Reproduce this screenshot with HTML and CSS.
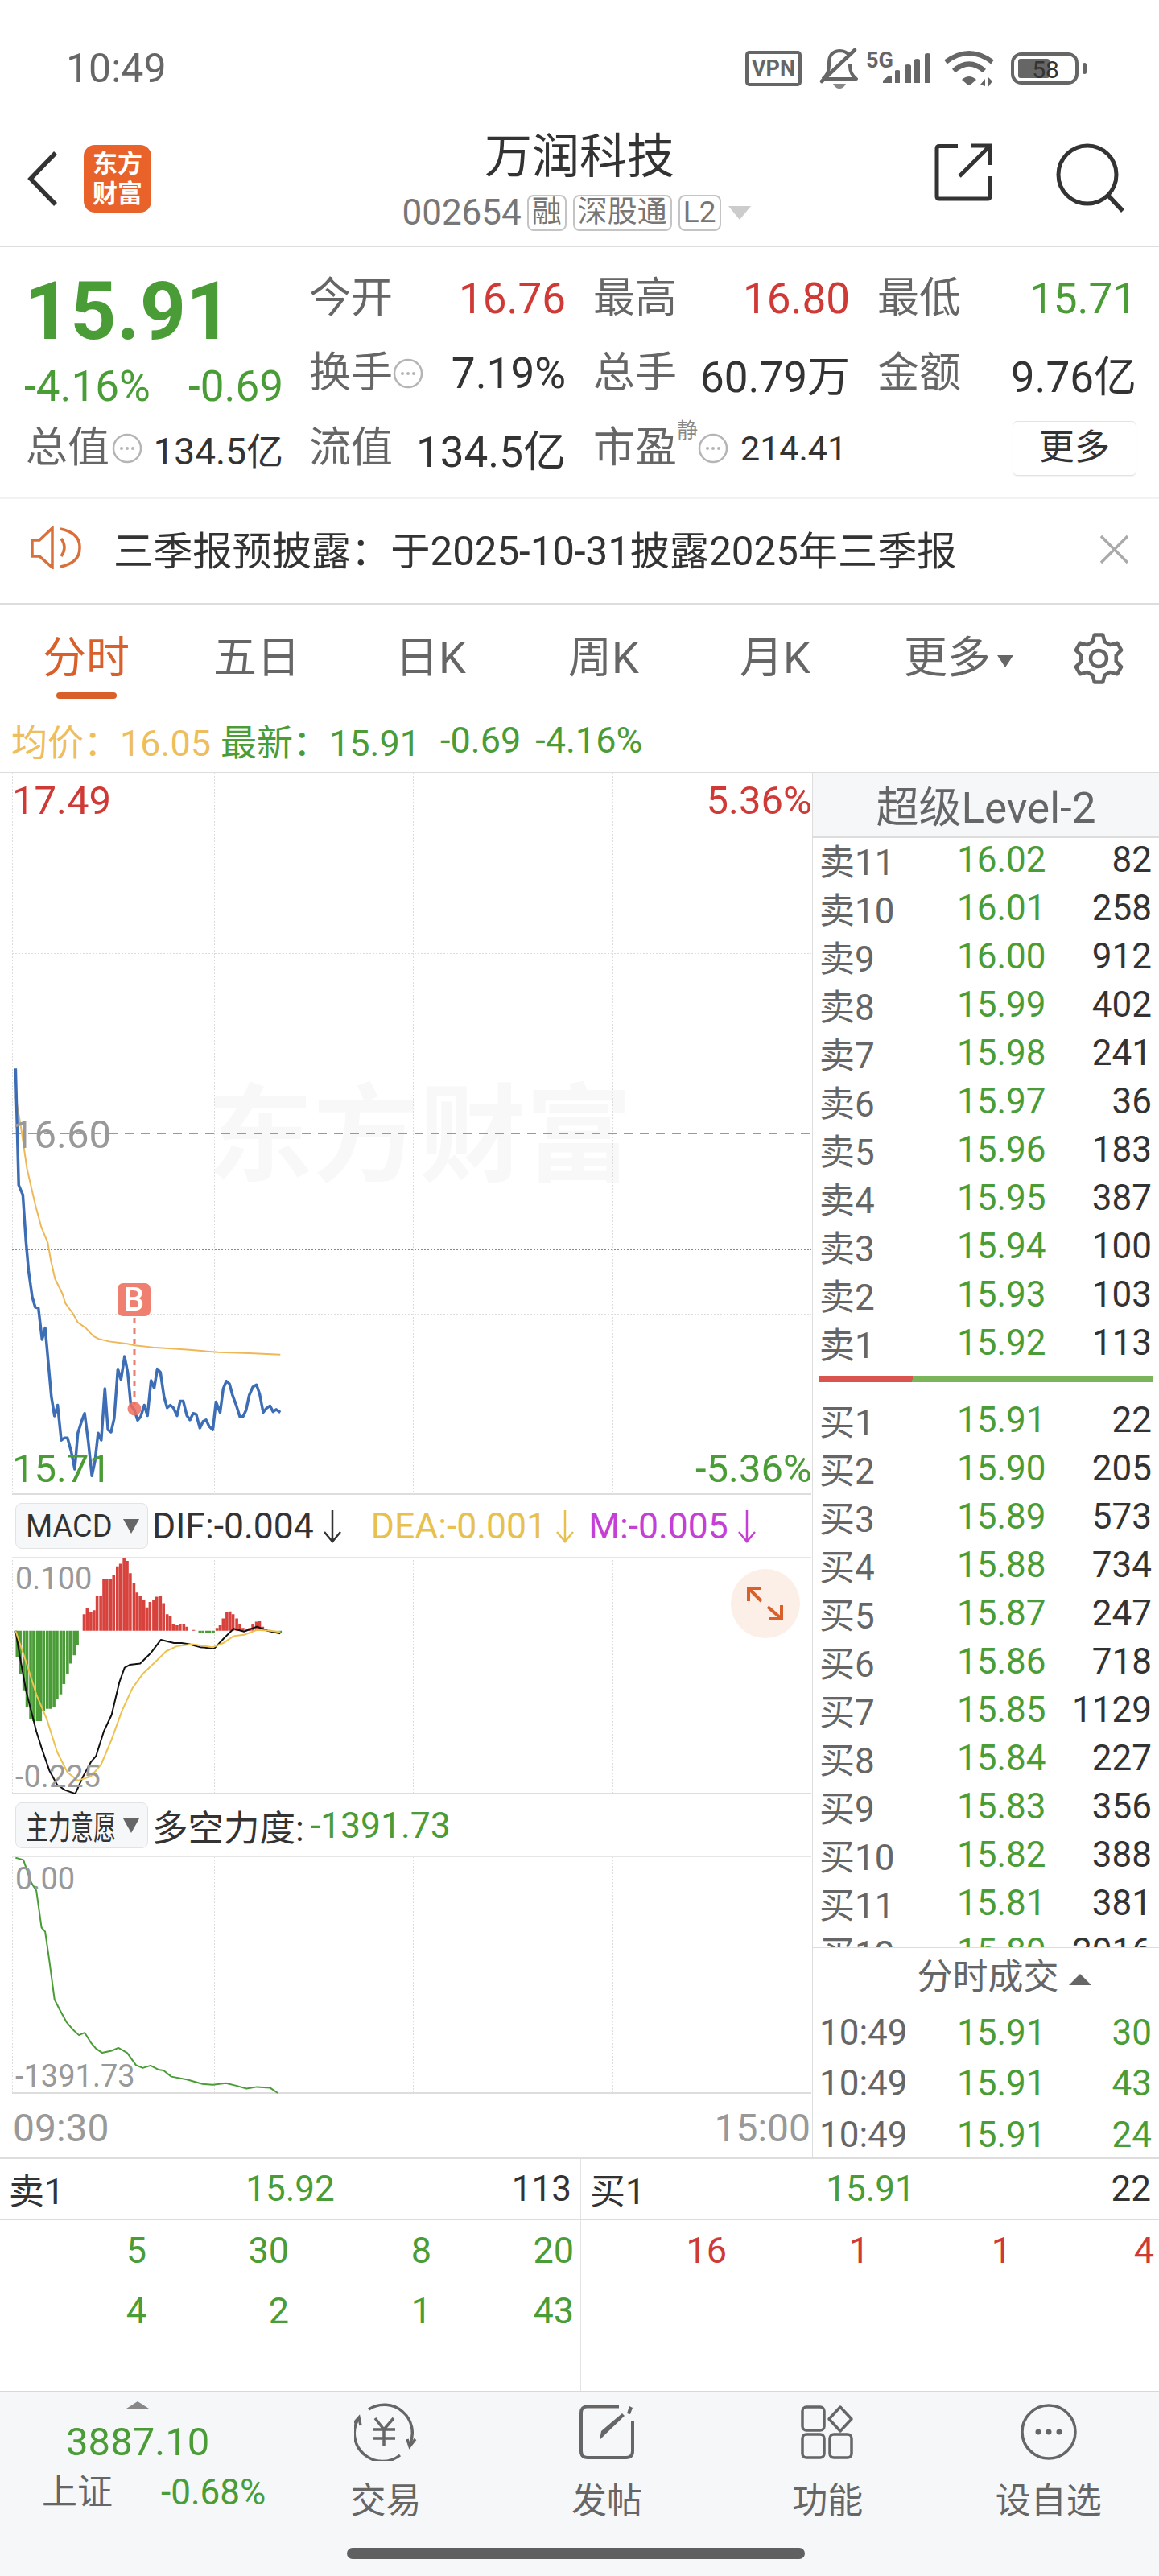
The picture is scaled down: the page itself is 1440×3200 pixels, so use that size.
FILE: index.html
```html
<!DOCTYPE html>
<html lang="zh-CN">
<head>
    <meta charset="UTF-8">
    <meta name="viewport" content="width=device-width, initial-scale=1.0">
    <title>万润科技</title>
    <link rel="stylesheet" href="styles.css">
</head>
<body>
    <svg class="defs" width="0" height="0">
        <symbol id="dots" viewBox="0 0 38 38">
            <circle cx="19" cy="19" r="17" fill="none" stroke="#b5b5b5" stroke-width="2.5"/>
            <circle cx="12" cy="19" r="2" fill="#b5b5b5"/><circle cx="19" cy="19" r="2" fill="#b5b5b5"/><circle cx="26" cy="19" r="2" fill="#b5b5b5"/>
        </symbol>
        <symbol id="down" viewBox="0 0 24 42">
            <path d="M12 1V40M2 28L12 40L22 28" fill="none" stroke="currentColor" stroke-width="2.5"/>
        </symbol>
    </svg>

    <div class="status">
        <span class="time">10:49</span>
        <div class="status-icons">
            <svg width="70" height="44" viewBox="0 0 70 44"><rect x="2" y="2" width="66" height="40" rx="3" fill="none" stroke="#666" stroke-width="4"/><text x="35" y="31" class="svg-vpn">VPN</text></svg>
            <svg class="si-bell" width="48" height="50" viewBox="0 0 48 50"><path d="M4 38Q12 32 12 22V18Q12 4 25 3Q34 3 38 10M38 20V22Q38 32 46 38H4" fill="none" stroke="#666" stroke-width="4" stroke-linejoin="round"/><path d="M3 41L44 2" stroke="#666" stroke-width="4.5" stroke-linecap="round"/><path d="M17 44H33Q30 50 25 50Q20 50 17 44Z" fill="#888"/></svg>
            <svg class="si-sig" width="80" height="46" viewBox="0 0 80 46"><text x="0" y="22" class="svg-5g">5G</text><path d="M21 41V38L27 33H32V41ZM36 41V26Q36 25 39 25Q42 25 42 26V41ZM48 41V20Q48 18 52 18Q56 18 56 20V41ZM60 41V13Q60 11 63.500 11Q67 11 67 13V41ZM73 41V6Q73 4 76.500 4Q80 4 80 6V41Z" fill="#666"/></svg>
            <svg class="si-wifi" width="64" height="48" viewBox="0 0 64 48"><path d="M3 16Q32 -6 61 16" fill="none" stroke="#666" stroke-width="6"/><path d="M13 27Q32 10 51 27" fill="none" stroke="#666" stroke-width="6"/><path d="M23 38L30 44Q32 45 34 44L41 38Q32 30 23 38Z" fill="#666"/><path d="M46 44L52 37V46ZM55 34V48L61 40Z" fill="#666"/></svg>
            <svg class="si-batt" width="94" height="40" viewBox="0 0 94 40"><rect x="2" y="2" width="80" height="36" rx="11" fill="none" stroke="#666" stroke-width="4"/><rect x="9" y="8" width="39" height="24" rx="3" fill="#666"/><rect x="89" y="13" width="5" height="14" rx="2.5" fill="#666"/><text x="43" y="32" class="svg-batt">58</text></svg>
        </div>
    </div>

    <div class="header">
        <div class="header-left">
            <svg width="38" height="68" viewBox="0 0 38 68"><path d="M35 2L4 34L35 66" fill="none" stroke="#333" stroke-width="5.500"/></svg>
            <div class="logo">东方<br>财富</div>
        </div>
        <div class="header-title">
            <div class="stock-name">万润科技</div>
            <div class="stock-sub">
                <span class="code">002654</span>
                <span class="tag">融</span><span class="tag">深股通</span><span class="tag">L2</span>
                <span class="tri-light"></span>
            </div>
        </div>
        <div class="header-right">
            <svg width="72" height="72" viewBox="0 0 72 72"><path d="M29 3.5H6Q3 3.500 3 6.500V66Q3 69 6 69H66Q69 69 69 66V41M69 27V3H45M31 41L69 3" fill="none" stroke="#333" stroke-width="5"/></svg>
            <svg width="88" height="88" viewBox="0 0 88 88"><circle cx="40" cy="39" r="36" fill="none" stroke="#333" stroke-width="5"/><path d="M66 65L84 84" stroke="#333" stroke-width="5.500"/></svg>
        </div>
    </div>

    <div class="quote">
        <div class="quote-left">
            <div class="price">15.91</div>
            <div class="change"><span>-4.16%</span><span>-0.69</span></div>
            <div class="cap"><span class="label">总值</span><svg class="dots"><use href="#dots"/></svg><span class="val-sm">134.5亿</span></div>
        </div>
        <div class="quote-grid">
            <div class="cell"><span class="label">今开</span><span class="val up">16.76</span></div>
            <div class="cell"><span class="label">最高</span><span class="val up">16.80</span></div>
            <div class="cell"><span class="label">最低</span><span class="val down">15.71</span></div>
            <div class="cell"><span class="label">换手</span><svg class="dots"><use href="#dots"/></svg><span class="val">7.19%</span></div>
            <div class="cell"><span class="label">总手</span><span class="val">60.79万</span></div>
            <div class="cell"><span class="label">金额</span><span class="val">9.76亿</span></div>
            <div class="cell"><span class="label">流值</span><span class="val">134.5亿</span></div>
            <div class="cell cell-pe"><span class="label">市盈</span><span class="sup">静</span><svg class="dots"><use href="#dots"/></svg><span class="val-pe">214.41</span></div>
            <div class="cell cell-more"><span class="more-btn">更多</span></div>
        </div>
    </div>

    <div class="notice">
        <svg width="63" height="53" viewBox="0 0 63 53"><g fill="none" stroke="#d9703a" stroke-width="3.500"><path d="M2 17H11L27 2V51L11 37H2Z"/><path d="M38 15Q46 26 38 37"/><path d="M37 3Q62 8 61 27Q61 45 37 50"/></g></svg>
        <span class="notice-text">三季报预披露：于2025-10-31披露2025年三季报</span>
        <svg class="notice-close" width="37" height="37" viewBox="0 0 37 37"><path d="M2 2L35 35M35 2L2 35" stroke="#aaa" stroke-width="3.500"/></svg>
    </div>

    <div class="tabs">
        <div class="tab active">分时</div>
        <div class="tab">五日</div>
        <div class="tab">日K</div>
        <div class="tab">周K</div>
        <div class="tab">月K</div>
        <div class="tab">更多<span class="tri-tab"></span></div>
        <div class="tab tab-gear">
            <svg width="64" height="64" viewBox="0 0 64 64"><polygon points="24.500,11.300 26.800,2.500 37.200,2.500 39.500,11.300 46.100,15.100 55,12.700 60.200,21.700 53.700,28.200 53.700,35.800 60.200,42.300 55,51.300 46.100,48.900 39.500,52.700 37.200,61.500 26.800,61.500 24.500,52.700 17.900,48.900 9,51.300 3.800,42.300 10.300,35.800 10.300,28.200 3.800,21.700 9,12.700 17.900,15.100" fill="none" stroke="#666" stroke-width="4.500" stroke-linejoin="round"/><circle cx="32" cy="32" r="10" fill="none" stroke="#666" stroke-width="4.500"/></svg>
        </div>
    </div>

    <div class="info">
        <span class="avg">均价：16.05</span>
        <span class="latest">最新：15.91</span>
        <span class="latest info-gap">-0.69</span>
        <span class="latest info-gap2">-4.16%</span>
    </div>

    <div class="main">
        <div class="charts">
            <div class="panel panel-price">
                <svg class="canvas" width="994" height="897" viewBox="15 960 994 897">
                    <text x="257" y="1457" class="watermark">东方财富</text>
                    <g class="grid">
                        <path d="M15 960V1857M266 960V1857M513 960V1857M761 960V1857M15 1184H1008M15 1632H1008"/>
                    </g>
                    <path d="M15 1408H1008" class="line-dash"/>
                    <path d="M15 1552.500H1008" class="line-prev"/>
                    <path d="M15 1856H1008" class="line-edge"/>
                    <g transform="translate(0 1260) scale(.645 .408)">
                        <polyline class="avg-line" points="30,250 40,340 52,470 68,580 80,650 92,695 98,750 106,805 120,850 126,880 140,910 150,938 165,955 180,980 190,988 210,996 245,1003 260,1008 300,1015 360,1021 420,1029 480,1032 540,1036"/>
                        <polyline class="price-line" points="30,165 36,520 44,550 50,690 55,780 62,860 68,892 74,895 81,990 87,955 93,1060 99,1165 105,1223 111,1190 118,1297 124,1290 130,1290 137,1330 144,1385 150,1275 157,1240 163,1215 170,1300 177,1405 183,1360 189,1275 195,1297 202,1140 208,1265 214,1272 220,1230 227,1080 233,1112 240,1042 246,1090 252,1190 259,1205 265,1236 271,1225 278,1190 284,1222 291,1115 297,1138 303,1080 309,1090 316,1165 322,1198 328,1190 334,1198 341,1222 347,1178 353,1178 360,1222 366,1235 372,1215 378,1218 385,1260 391,1240 397,1235 403,1255 410,1265 416,1180 424,1212 430,1140 436,1117 442,1125 448,1160 455,1190 462,1225 468,1225 474,1205 480,1160 487,1135 494,1128 500,1155 507,1212 513,1200 520,1192 526,1210 532,1203 540,1212"/>
                    </g>
                    <path d="M167 1637V1745" class="b-line"/>
                    <circle cx="167" cy="1750" r="8.500" fill="#ee6f5f" fill-opacity=".85"/>
                    <rect x="146" y="1594" width="41" height="41" rx="7" fill="#ee7f71"/>
                    <text x="166.500" y="1628" class="b-text">B</text>
                </svg>
                <span class="chart-label tl up">17.49</span>
                <span class="chart-label tr up">5.36%</span>
                <span class="chart-label mid">16.60</span>
                <span class="chart-label bl down">15.71</span>
                <span class="chart-label br down">-5.36%</span>
            </div>

            <div class="ind-row">
                <div class="picker"><span class="picker-name">MACD</span><span class="tri-pick"></span></div>
                <span class="ind">DIF:-0.004</span><svg class="arrow ink"><use href="#down"/></svg>
                <span class="ind dea ind-gap">DEA:-0.001</span><svg class="arrow dea"><use href="#down"/></svg>
                <span class="ind mag ind-gap2">M:-0.005</span><svg class="arrow mag"><use href="#down"/></svg>
            </div>

            <div class="panel panel-sub">
                <svg class="canvas" width="994" height="295" viewBox="15 1934 994 295">
                    <g class="grid"><path d="M15 1934V2228M266 1934V2228M513 1934V2228M761 1934V2228"/></g>
                    <path d="M15 1934.500H1008" class="line-top"/>
                    <path d="M15 2228H1008" class="line-edge"/>
                    <g transform="translate(0 1860) scale(.645 .51)">
                        <path class="bars-green" d="M33 325V390M39 325V430M46 325V470M52 325V510M59 325V540M65 325V545M72 325V545M78 325V545M84 325V520M91 325V515M97 325V515M104 325V510M110 325V490M117 325V480M123 325V455M130 325V430M136 325V405M143 325V385M149 325V360M385 325V330M391 325V330M398 325V330M404 325V330M411 325V330M540 325V330"/>
                        <path class="bars-red" d="M162 325V285M168 325V270M175 325V280M181 325V275M187 325V240M194 325V240M200 325V200M206 325V200M213 325V200M219 325V190M226 325V168M232 325V162M239 325V148M245 325V155M251 325V185M258 325V210M264 325V232M270 325V240M277 325V250M283 325V268M289 325V255M296 325V250M302 325V242M309 325V240M315 325V258M322 325V285M328 325V290M334 325V310M341 325V312M347 325V308M354 325V308M360 325V315M373 325V323M418 325V318M424 325V312M430 325V295M437 325V280M443 325V278M449 325V285M456 325V295M462 325V310M468 325V318M475 325V322M481 325V318M487 325V310M494 325V303M500 325V302M506 325V315M513 325V322M519 325V323"/>
                        <polyline class="dif-line" points="30,325 40,400 50,470 60,520 70,570 80,610 95,665 110,700 125,713 145,722 160,680 175,645 185,630 200,570 215,530 230,450 240,415 250,408 270,405 290,380 310,347 335,355 350,355 365,358 385,365 413,368 430,345 450,320 470,327 495,315 515,325 540,332"/>
                        <polyline class="dea-line" points="30,325 50,400 70,480 90,540 110,620 130,670 150,690 175,680 195,650 215,590 235,520 255,465 275,430 300,400 320,375 340,363 370,358 410,365 430,355 450,338 470,335 495,323 520,325 540,328"/>
                    </g>
                    <circle cx="951" cy="1992" r="43" fill="#fbefe8"/>
                    <path d="M930 1989V1973H945M930 1973L946 1989M971 1994V2011H955M971 2011L954 1996" fill="none" stroke="#d9602b" stroke-width="4"/>
                </svg>
                <span class="chart-label small sub-top">0.100</span>
                <span class="chart-label small sub-bot">-0.225</span>
            </div>

            <div class="ind-row">
                <div class="picker"><span class="picker-cn">主力意愿</span><span class="tri-pick"></span></div>
                <span class="ind ind-cn">多空力度:</span>
                <span class="ind down">-1391.73</span>
            </div>

            <div class="panel panel-sub">
                <svg class="canvas" width="994" height="295" viewBox="15 2307 994 295">
                    <g class="grid"><path d="M15 2307V2601M266 2307V2601M513 2307V2601M761 2307V2601"/></g>
                    <path d="M15 2307.500H1008" class="line-top"/>
                    <path d="M15 2601H1008" class="line-edge"/>
                    <g transform="translate(0 1860) scale(.645 .51)">
                        <polyline class="force-line" points="30,880 45,885 60,940 70,960 80,1050 87,1060 95,1130 105,1225 115,1250 128,1280 140,1298 152,1312 163,1306 175,1330 185,1345 197,1355 215,1350 228,1343 245,1355 262,1385 275,1392 290,1386 305,1396 315,1398 330,1413 360,1420 390,1431 410,1433 435,1429 455,1435 475,1442 495,1438 520,1440 535,1453"/>
                    </g>
                </svg>
                <span class="chart-label small sub-top-b">0.00</span>
                <span class="chart-label small sub-bot-b">-1391.73</span>
            </div>

            <div class="time-row"><span>09:30</span><span>15:00</span></div>
        </div>

        <div class="book">
            <div class="book-head">超级Level-2</div>
            <div class="book-list">
                <div class="lv"><span class="lv-name">卖11</span><span class="lv-price">16.02</span><span class="lv-vol">82</span></div>
                <div class="lv"><span class="lv-name">卖10</span><span class="lv-price">16.01</span><span class="lv-vol">258</span></div>
                <div class="lv"><span class="lv-name">卖9</span><span class="lv-price">16.00</span><span class="lv-vol">912</span></div>
                <div class="lv"><span class="lv-name">卖8</span><span class="lv-price">15.99</span><span class="lv-vol">402</span></div>
                <div class="lv"><span class="lv-name">卖7</span><span class="lv-price">15.98</span><span class="lv-vol">241</span></div>
                <div class="lv"><span class="lv-name">卖6</span><span class="lv-price">15.97</span><span class="lv-vol">36</span></div>
                <div class="lv"><span class="lv-name">卖5</span><span class="lv-price">15.96</span><span class="lv-vol">183</span></div>
                <div class="lv"><span class="lv-name">卖4</span><span class="lv-price">15.95</span><span class="lv-vol">387</span></div>
                <div class="lv"><span class="lv-name">卖3</span><span class="lv-price">15.94</span><span class="lv-vol">100</span></div>
                <div class="lv"><span class="lv-name">卖2</span><span class="lv-price">15.93</span><span class="lv-vol">103</span></div>
                <div class="lv"><span class="lv-name">卖1</span><span class="lv-price">15.92</span><span class="lv-vol">113</span></div>
            </div>
            <div class="ratio-bar"></div>
            <div class="book-list buy-list">
                <div class="lv"><span class="lv-name">买1</span><span class="lv-price">15.91</span><span class="lv-vol">22</span></div>
                <div class="lv"><span class="lv-name">买2</span><span class="lv-price">15.90</span><span class="lv-vol">205</span></div>
                <div class="lv"><span class="lv-name">买3</span><span class="lv-price">15.89</span><span class="lv-vol">573</span></div>
                <div class="lv"><span class="lv-name">买4</span><span class="lv-price">15.88</span><span class="lv-vol">734</span></div>
                <div class="lv"><span class="lv-name">买5</span><span class="lv-price">15.87</span><span class="lv-vol">247</span></div>
                <div class="lv"><span class="lv-name">买6</span><span class="lv-price">15.86</span><span class="lv-vol">718</span></div>
                <div class="lv"><span class="lv-name">买7</span><span class="lv-price">15.85</span><span class="lv-vol">1129</span></div>
                <div class="lv"><span class="lv-name">买8</span><span class="lv-price">15.84</span><span class="lv-vol">227</span></div>
                <div class="lv"><span class="lv-name">买9</span><span class="lv-price">15.83</span><span class="lv-vol">356</span></div>
                <div class="lv"><span class="lv-name">买10</span><span class="lv-price">15.82</span><span class="lv-vol">388</span></div>
                <div class="lv"><span class="lv-name">买11</span><span class="lv-price">15.81</span><span class="lv-vol">381</span></div>
                <div class="lv"><span class="lv-name">买12</span><span class="lv-price">15.80</span><span class="lv-vol">2016</span></div>
            </div>
            <div class="ticks">
                <div class="ticks-head">分时成交<span class="tri-up"></span></div>
                <div class="tick"><span class="lv-name">10:49</span><span class="lv-price">15.91</span><span class="lv-vol down">30</span></div>
                <div class="tick"><span class="lv-name">10:49</span><span class="lv-price">15.91</span><span class="lv-vol down">43</span></div>
                <div class="tick"><span class="lv-name">10:49</span><span class="lv-price">15.91</span><span class="lv-vol down">24</span></div>
            </div>
        </div>
    </div>

    <div class="best">
        <div class="best-side"><span>卖1</span><span class="down">15.92</span><span class="best-vol">113</span></div>
        <div class="best-side best-buy"><span>买1</span><span class="down">15.91</span><span class="best-vol">22</span></div>
    </div>
    <div class="flow">
        <div class="flow-side">
            <span class="down">5</span><span class="down">30</span><span class="down">8</span><span class="down">20</span>
            <span class="down">4</span><span class="down">2</span><span class="down">1</span><span class="down">43</span>
        </div>
        <div class="flow-side flow-buy">
            <span class="up">16</span><span class="up">1</span><span class="up">1</span><span class="up">4</span>
        </div>
    </div>

    <div class="nav">
        <div class="nav-row">
            <div class="market">
                <span class="tri-market"></span>
                <div class="market-val">3887.10</div>
                <div class="market-sub"><span class="market-name">上证</span><span class="down">-0.68%</span></div>
            </div>
            <div class="nav-item">
                <svg width="78" height="72" viewBox="0 0 78 72"><g fill="none" stroke="#666" stroke-width="3.500"><path d="M18 8A35 35 0 0 1 69 52"/><path d="M76 45L69 54L66 45"/><path d="M57 65A35 35 0 0 1 5 20"/><path d="M0 25L6 18L8 28"/><path d="M26 19L37 33L49 19M37 33V54M23 33H51M23 44H51"/></g></svg>
                <span>交易</span>
            </div>
            <div class="nav-item">
                <svg width="68" height="68" viewBox="0 0 68 68"><path d="M49 2.500H10Q2 2.500 2 10V58Q2 66 10 66H58Q66 66 66 58V21" fill="none" stroke="#666" stroke-width="4"/><path d="M25 44L27 33L53 11L56 14L31 38Z M59 11L62 2L66 4L63 12Z" fill="#666"/></svg>
                <span>发帖</span>
            </div>
            <div class="nav-item">
                <svg width="66" height="66" viewBox="0 0 66 66"><g fill="none" stroke="#666" stroke-width="3.500"><rect x="2" y="2" width="27" height="29" rx="5"/><path d="M49 2L63 17L49 32L35 17Z" stroke-linejoin="round"/><rect x="2" y="36" width="27" height="29" rx="5"/><rect x="36" y="36" width="27" height="29" rx="5"/></g></svg>
                <span>功能</span>
            </div>
            <div class="nav-item">
                <svg width="70" height="70" viewBox="0 0 70 70"><circle cx="35" cy="35" r="33" fill="none" stroke="#666" stroke-width="3.500"/><circle cx="22" cy="35" r="3.500" fill="#666"/><circle cx="35" cy="35" r="3.500" fill="#666"/><circle cx="48" cy="35" r="3.500" fill="#666"/></svg>
                <span>设自选</span>
            </div>
        </div>
        <div class="home-bar"></div>
    </div>
</body>
</html>
```

FILE: styles.css
```css
* {
    box-sizing: border-box;
}
body {
    width: 1440px;
    height: 3200px;
    margin: 0;
    overflow: hidden;
    background-color: #ffffff;
    color: #333;
    font-family: Roboto, "Noto Sans CJK SC", sans-serif;
}
.defs {
    display: block;
}
.up {
    color: #d03a36;
}
.down {
    color: #4a9c36;
}
svg {
    flex: none;
}

/* status bar */
.status {
    display: flex;
    align-items: center;
    height: 170px;
    padding: 0 90px 0 82px;
}
.time {
    font-size: 50px;
    color: #666;
}
.status-icons {
    display: flex;
    align-items: center;
    margin-left: auto;
}
.si-bell {
    margin-left: 22px;
}
.si-sig {
    margin-left: 10px;
}
.si-wifi {
    margin-left: 16px;
}
.si-batt {
    margin-left: 20px;
}
.svg-vpn {
    font: bold 27px Roboto, sans-serif;
    fill: #666;
    text-anchor: middle;
}
.svg-5g {
    font: bold 27px Roboto, sans-serif;
    fill: #666;
}
.svg-batt {
    font: 30px Roboto, sans-serif;
    fill: #333;
    text-anchor: middle;
}

/* header */
.header {
    display: grid;
    grid-template-columns: 1fr auto 1fr;
    align-items: start;
    height: 137px;
    border-bottom: 1px solid #ddd;
}
.header-left {
    display: flex;
    align-items: center;
    gap: 32px;
    height: 104px;
    padding: 0 0 0 34px;
}
.logo {
    width: 84px;
    height: 84px;
    padding-top: 5px;
    border-radius: 14px;
    background-color: #e8622a;
    color: #fff;
    font-size: 31px;
    font-weight: 700;
    line-height: 37px;
    text-align: center;
}
.header-title {
    text-align: center;
}
.stock-name {
    font-size: 59px;
    line-height: 50px;
    color: #333;
}
.stock-sub {
    display: flex;
    align-items: center;
    gap: 8px;
    height: 50px;
    margin-top: 19px;
    color: #777;
}
.code {
    margin-right: -1px;
    font-size: 44px;
}
.tag {
    height: 45px;
    padding: 0 4px;
    border: 2px solid #c4c4c4;
    border-radius: 8px;
    font-size: 37px;
    line-height: 40px;
}
.tri-light {
    margin: 0 8px 0 1px;
    border-top: 17px solid #ccc;
    border-left: 14px solid transparent;
    border-right: 14px solid transparent;
}
.header-right {
    display: flex;
    align-items: flex-start;
    justify-content: flex-end;
    gap: 78px;
    padding: 8px 41px 0 0;
}

/* quote */
.quote {
    display: flex;
    height: 313px;
    border-bottom: 3px solid #f2f2f2;
}
.quote-left {
    width: 384px;
    padding: 28px 32px 0 32px;
}
.price {
    margin-left: -2px;
    color: #4a9c36;
    font-size: 100px;
    font-weight: 700;
    line-height: 104px;
}
.change {
    display: flex;
    justify-content: space-between;
    margin: 16px 0 0 -2px;
    color: #4a9c36;
    font-size: 53px;
    line-height: 50px;
}
.cap {
    display: flex;
    align-items: center;
    gap: 3px;
    height: 50px;
    margin-top: 27px;
}
.label {
    color: #666;
    font-size: 52px;
    line-height: 50px;
}
.val-sm {
    margin-left: auto;
    font-size: 46px;
}
.dots {
    width: 38px;
    height: 38px;
}
.quote-grid {
    display: grid;
    grid-template-columns: 353px 353px 326px;
    grid-auto-rows: 93px;
    padding-top: 17px;
}
.cell {
    display: flex;
    align-items: center;
    padding-right: 34px;
}
.cell:nth-child(3n) {
    padding-right: 4px;
}
.val {
    margin-left: auto;
    font-size: 53px;
}
.sup {
    align-self: flex-start;
    margin: 10px 0 0 0;
    color: #888;
    font-size: 26px;
    line-height: 30px;
}
.val-pe {
    margin-left: 15px;
    font-size: 43px;
}
.cell-more {
    justify-content: flex-end;
}
.more-btn {
    width: 154px;
    height: 68px;
    border: 1px solid #e3e3e3;
    border-radius: 6px;
    box-shadow: 0 1px 1px rgba(0, 0, 0, 0.05);
    font-size: 44px;
    line-height: 64px;
    text-align: center;
}

/* notice */
.notice {
    display: flex;
    align-items: center;
    height: 131px;
    padding: 0 37px 8px 38px;
    border-bottom: 2px solid #ddd;
}
.notice-text {
    margin-left: 40px;
    font-size: 49.2px;
}
.notice-close {
    margin-left: auto;
    margin-top: 4px;
}

/* tabs */
.tabs {
    display: grid;
    grid-template-columns: 214px 210px 222px 208px 218px 238px 1fr;
    align-items: center;
    height: 129px;
    padding-top: 5px;
    border-bottom: 1px solid #ddd;
}
.tab {
    position: relative;
    color: #666;
    font-size: 54px;
    line-height: 60px;
    text-align: center;
}
.tab.active {
    color: #d9602b;
}
.tab.active::after {
    content: "";
    position: absolute;
    left: 70px;
    bottom: -20px;
    width: 75px;
    height: 8px;
    border-radius: 4px;
    background-color: #d9602b;
}
.tab-gear {
    display: flex;
    padding-left: 23px;
}
.tri-tab {
    display: inline-block;
    margin-left: 8px;
    vertical-align: middle;
    border-top: 15px solid #666;
    border-left: 10px solid transparent;
    border-right: 10px solid transparent;
}

/* info line */
.info {
    display: flex;
    align-items: center;
    height: 80px;
    padding-left: 14px;
    border-bottom: 1px solid #ddd;
    font-size: 45px;
}
.avg {
    color: #eebd5c;
}
.latest {
    color: #4a9c36;
}
.avg + .latest {
    margin-left: 12px;
}
.info-gap {
    margin-left: 25px;
}
.info-gap2 {
    margin-left: 18px;
}

/* charts */
.main {
    display: flex;
    height: 1722px;
    border-bottom: 2px solid #ddd;
}
.charts {
    width: 1009px;
}
.panel {
    position: relative;
    margin-left: 15px;
}
.panel-price {
    height: 897px;
}
.panel-sub {
    height: 295px;
}
.canvas {
    display: block;
}
.grid path {
    fill: none;
    stroke: #ddd;
    stroke-width: 1;
    stroke-dasharray: 2 2;
}
.grid {
    shape-rendering: crispEdges;
}
.line-dash {
    stroke: #999;
    stroke-width: 2;
    stroke-dasharray: 11 9;
}
.line-prev {
    stroke: #d9703a;
    stroke-width: 1;
    stroke-dasharray: 2 2;
}
.line-edge {
    stroke: #ddd;
    stroke-width: 2;
}
.line-top {
    stroke: #e6e6e6;
    stroke-width: 1;
}
.watermark {
    font-size: 132px;
    font-weight: 700;
    fill: #f8f8f8;
}
polyline {
    fill: none;
    vector-effect: non-scaling-stroke;
    stroke-linejoin: round;
}
.price-line {
    stroke: #3d6db5;
    stroke-width: 3.500;
}
.avg-line {
    stroke: #eeb858;
    stroke-width: 2;
}
.b-line {
    stroke: #e87f72;
    stroke-width: 3;
    stroke-dasharray: 7 6;
}
.b-text {
    fill: #fff;
    font-size: 40px;
    font-weight: 500;
    text-anchor: middle;
}
.bars-green, .bars-red {
    fill: none;
    stroke-width: 3.600;
    vector-effect: non-scaling-stroke;
}
.bars-green {
    stroke: #4a9c36;
}
.bars-red {
    stroke: #d8423c;
}
.dif-line {
    stroke: #111;
    stroke-width: 2;
}
.dea-line {
    stroke: #eec24f;
    stroke-width: 2;
}
.force-line {
    stroke: #4a9c36;
    stroke-width: 2;
}
.chart-label {
    position: absolute;
    font-size: 49px;
    line-height: 50px;
}
.chart-label.small {
    color: #999;
    font-size: 38px;
}
.tl {
    top: 10px;
    left: 0;
}
.tr {
    top: 10px;
    right: 0;
}
.mid {
    top: 425px;
    left: 0;
    color: #999;
}
.bl {
    top: 840px;
    left: 0;
}
.br {
    top: 840px;
    right: 0;
}
.sub-top {
    top: 2px;
    left: 4px;
}
.sub-bot {
    top: 248px;
    left: 4px;
}
.sub-top-b {
    top: 3px;
    left: 4px;
}
.sub-bot-b {
    top: 248px;
    left: 4px;
}
.ind-row {
    display: flex;
    align-items: center;
    height: 77px;
    padding-left: 19px;
}
.picker {
    display: flex;
    align-items: center;
    justify-content: space-between;
    width: 165px;
    height: 57px;
    margin-right: 5px;
    padding: 0 10px 0 12px;
    border: 1px solid #e3e3e3;
    border-radius: 8px;
    background-color: #f6f7f9;
}
.picker-name {
    font-size: 38px;
}
.picker-cn {
    width: 112px;
    font-size: 28px;
    white-space: nowrap;
    transform: scaleY(1.45);
}
.tri-pick {
    border-top: 18px solid #666;
    border-left: 10px solid transparent;
    border-right: 10px solid transparent;
}
.ind {
    font-size: 44.5px;
}
.ind-cn {
    margin-right: 8px;
}
.dea {
    color: #e8c04e;
}
.mag {
    color: #c43fd6;
}
.ind-gap {
    margin-left: 36px;
}
.ind-gap2 {
    margin-left: 17px;
}
.arrow {
    width: 24px;
    height: 42px;
    margin-left: 11px;
}
.ink {
    color: #333;
}
.time-row {
    display: flex;
    justify-content: space-between;
    align-items: center;
    height: 78px;
    padding: 6px 2px 0 16px;
    color: #999;
    font-size: 48px;
}

/* order book */
.book {
    display: flex;
    flex-direction: column;
    flex: 1;
    border-left: 1px solid #ddd;
}
.book-head {
    height: 81px;
    padding-top: 1px;
    border-bottom: 2px solid #ddd;
    background-color: #f6f7f9;
    color: #666;
    font-size: 53px;
    line-height: 86px;
    text-align: center;
}
.book-list {
    padding: 0 9px 0 8px;
}
.lv {
    display: flex;
    flex: none;
    align-items: center;
    height: 60px;
    padding-bottom: 7px;
    font-size: 44px;
}
.lv-name {
    width: 171px;
    color: #666;
}
.lv-price {
    color: #4a9c36;
}
.lv-vol {
    margin-left: auto;
}
.ratio-bar {
    flex: none;
    height: 8px;
    margin: 8px 8px 0;
    background: linear-gradient(100deg, #d9534f 28%, #7ab55c 28%);
}
.buy-list {
    flex: none;
    height: 682px;
    margin-top: 20px;
    overflow: hidden;
}
.ticks {
    flex: 1;
    padding: 0 9px 0 8px;
    border-top: 1px solid #ddd;
}
.ticks-head {
    height: 73px;
    padding-left: 46px;
    color: #666;
    font-size: 44px;
    line-height: 73px;
    text-align: center;
}
.tri-up {
    display: inline-block;
    margin-left: 12px;
    vertical-align: middle;
    border-bottom: 14px solid #666;
    border-left: 14px solid transparent;
    border-right: 14px solid transparent;
}
.tick {
    display: flex;
    align-items: center;
    height: 63.500px;
    font-size: 44px;
}

/* best bid and ask */
.best {
    display: flex;
    height: 76px;
    border-bottom: 2px solid #ddd;
}
.best-side {
    display: grid;
    grid-template-columns: 1fr auto 1fr;
    align-items: center;
    width: 721px;
    padding: 0 11px;
    font-size: 44px;
}
.best-vol {
    text-align: right;
}
.best-buy {
    width: 719px;
    padding: 0 10px 0 11px;
    border-left: 1px solid #e3e3e3;
}
.flow {
    display: flex;
    height: 212px;
}
.flow-side {
    display: grid;
    grid-template-columns: repeat(4, 177px);
    grid-auto-rows: 75px;
    align-items: center;
    width: 721px;
    padding-left: 5px;
    font-size: 45px;
    text-align: right;
}
.flow-buy {
    width: 719px;
    padding-left: 4px;
    border-left: 1px solid #e3e3e3;
}

/* bottom bar */
.nav {
    height: 230px;
    border-top: 2px solid #d8d8d8;
    background-color: #f6f7f9;
}
.nav-row {
    display: flex;
    height: 193px;
}
.market {
    display: flex;
    flex-direction: column;
    align-items: center;
    width: 343px;
}
.tri-market {
    margin-top: 11px;
    border-bottom: 9px solid #888;
    border-left: 14px solid transparent;
    border-right: 14px solid transparent;
}
.market-val {
    margin-top: 17px;
    color: #4a9c36;
    font-size: 49px;
    line-height: 50px;
}
.market-sub {
    display: flex;
    align-items: center;
    gap: 60px;
    margin: 15px 0 0 40px;
    font-size: 44px;
    line-height: 44px;
}
.market-name {
    color: #666;
}
.nav-item {
    display: flex;
    flex-direction: column;
    align-items: center;
    width: 275px;
    padding-top: 13px;
    color: #666;
    font-size: 44px;
}
.nav-item svg {
    height: 72px;
    margin-bottom: 14px;
}
.home-bar {
    width: 569px;
    height: 14px;
    margin-left: 431px;
    border-radius: 7px;
    background-color: #606060;
}
```
